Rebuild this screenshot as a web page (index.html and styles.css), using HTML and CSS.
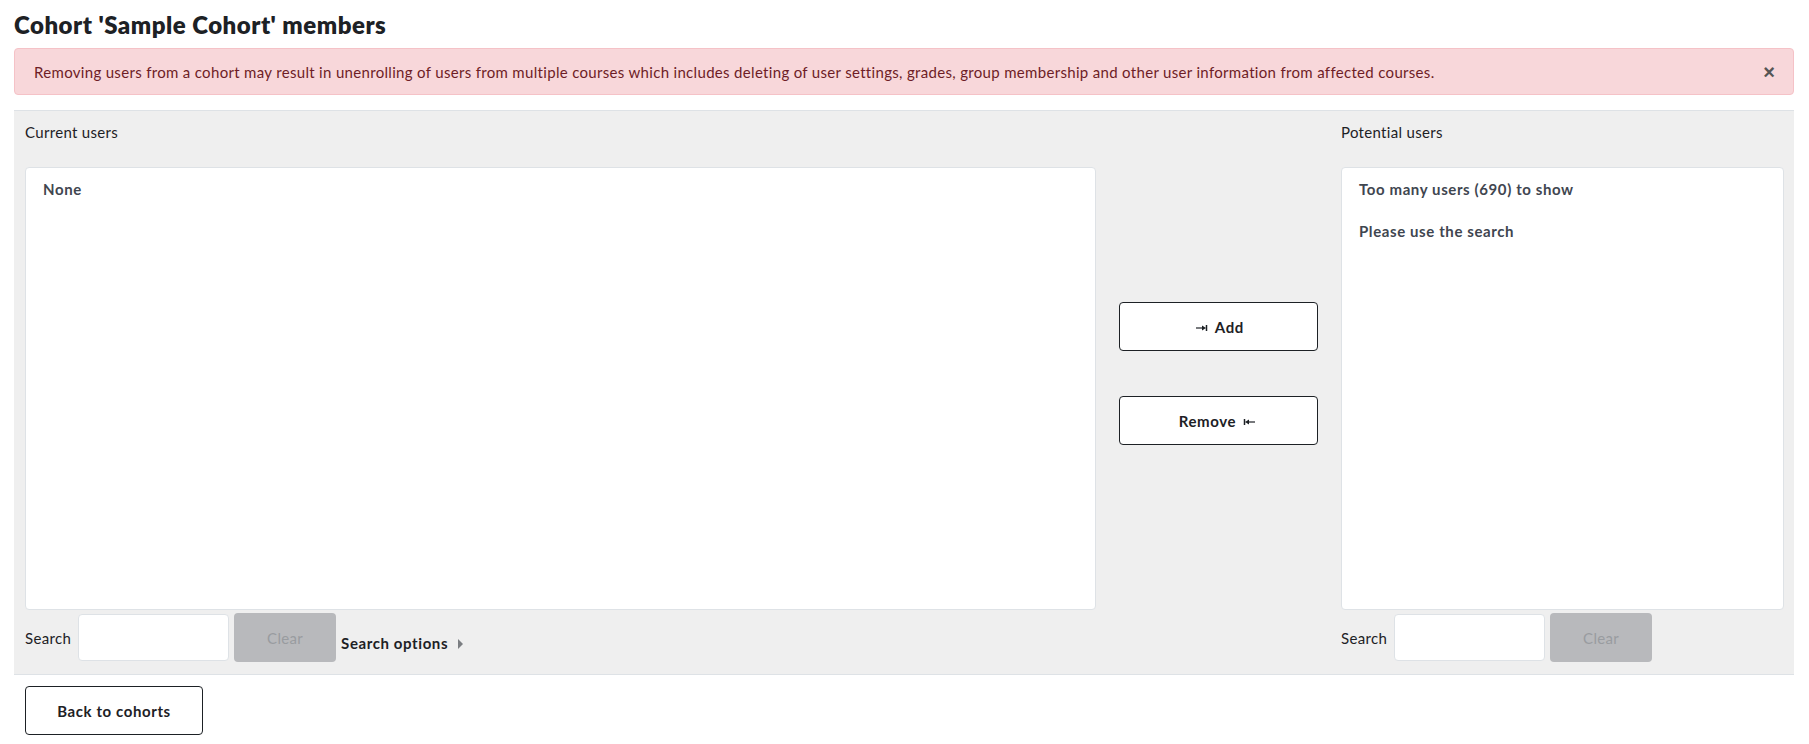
FILE: index.html
```html
<!DOCTYPE html>
<html lang="en">

<head>
    <meta charset="UTF-8">
    <meta name="viewport" content="width=device-width, initial-scale=1.0">
    <title>Cohort members</title>
    <link rel="stylesheet" href="styles.css">
</head>

<body>
    <div class="page">
        <h2 class="title">Cohort 'Sample Cohort' members</h2>

        <div class="alert">
            <span>Removing users from a cohort may result in unenrolling of users from multiple courses which includes deleting of user settings, grades, group membership and other user information from affected courses.</span>
            <button class="close">&times;</button>
        </div>

        <div class="selector">
            <div class="col">
                <label class="col-label">Current users</label>
                <div class="userbox">
                    <div class="opt">None</div>
                </div>
                <div class="search-row">
                    <label>Search</label>
                    <input type="text" class="search-input">
                    <button class="clear" disabled>Clear</button>
                    <span class="search-options">Search options <span class="caret"></span></span>
                </div>
            </div>

            <div class="middle">
                <button class="btn">
                    <svg class="arrow" width="12" height="8" viewBox="0 0 12 8">
                        <path d="M0 4h7" stroke="#1d2125" stroke-width="1.2" />
                        <path d="M6 1.5l4 2.5-4 2.5z" fill="#1d2125" />
                        <path d="M10.5 1v6" stroke="#1d2125" stroke-width="1.5" />
                    </svg>
                    Add
                </button>
                <button class="btn">
                    Remove
                    <svg class="arrow" width="12" height="8" viewBox="0 0 12 8">
                        <path d="M1.5 1v6" stroke="#1d2125" stroke-width="1.5" />
                        <path d="M6 1.5l-4 2.5 4 2.5z" fill="#1d2125" />
                        <path d="M5 4h7" stroke="#1d2125" stroke-width="1.2" />
                    </svg>
                </button>
            </div>

            <div class="col">
                <label class="col-label">Potential users</label>
                <div class="userbox">
                    <div class="opt">Too many users (690) to show</div>
                    <div class="opt">Please use the search</div>
                </div>
                <div class="search-row">
                    <label>Search</label>
                    <input type="text" class="search-input">
                    <button class="clear" disabled>Clear</button>
                </div>
            </div>
        </div>

        <button class="btn back">Back to cohorts</button>
    </div>
</body>

</html>
```

FILE: styles.css
```css
* {
    box-sizing: border-box;
}

body {
    margin: 0;
    font-family: Lato, "Liberation Sans", sans-serif;
    font-size: 15px;
    letter-spacing: 0.32px;
    color: #1d2125;
    background-color: #fff;
}

.page {
    padding: 0 15px 0 14px;
}

.title {
    margin: 0;
    padding-top: 11px;
    font-size: 24px;
    font-weight: 800;
    letter-spacing: 0.5px;
    line-height: 28px;
    color: #1d2125;
}

.alert {
    display: flex;
    align-items: center;
    justify-content: space-between;
    margin-top: 9px;
    height: 47px;
    padding: 0 18px 0 19px;
    background-color: #f8d7da;
    border: 1px solid #f5c2c7;
    border-radius: 4px;
    color: #6e1d26;
}

.close {
    background: none;
    border: none;
    padding: 0;
    font-size: 20px;
    font-weight: bold;
    color: #555;
    cursor: pointer;
    line-height: 1;
}

.selector {
    display: grid;
    grid-template-columns: 1071px 245px 1fr;
    margin-top: 15px;
    padding: 0 10px 11px 11px;
    background-color: #efefef;
    border-top: 1px solid #dee2e6;
    border-bottom: 1px solid #dee2e6;
}

.col {
    display: flex;
    flex-direction: column;
}

.col-label {
    height: 56px;
    line-height: 42px;
    color: #1d2125;
}

.userbox {
    height: 443px;
    padding: 12px 17px;
    background-color: #fff;
    border: 1px solid #dee2e6;
    border-radius: 4px;
}

.opt {
    height: 42px;
    line-height: 18px;
    font-weight: 700;
    letter-spacing: 0.6px;
    color: #3f4650;
}

.search-row {
    display: flex;
    align-items: center;
    height: 51px;
    margin-top: 2px;
}

.search-row label {
    margin-right: 7px;
}

.search-input {
    width: 151px;
    height: 47px;
    border: 1px solid #dee2e6;
    border-radius: 4px;
    background-color: #fff;
    font-size: 15px;
}

.clear {
    width: 102px;
    height: 49px;
    margin-left: 5px;
    background-color: #b8b9bc;
    border: none;
    border-radius: 4px;
    color: #999ca0;
    font-family: inherit;
    font-size: 15px;
    letter-spacing: inherit;
}

.search-options {
    margin-left: 5px;
    margin-top: 10px;
    font-weight: 700;
    letter-spacing: 0.6px;
}

.caret {
    display: inline-block;
    margin-left: 6px;
    border-left: 5px solid #7b7e82;
    border-top: 5px solid transparent;
    border-bottom: 5px solid transparent;
}

.middle {
    display: flex;
    flex-direction: column;
    align-items: center;
    gap: 45px;
    padding-top: 191px;
}

.btn {
    width: 199px;
    height: 49px;
    background-color: #fff;
    border: 1px solid #1d2125;
    border-radius: 4px;
    font-family: inherit;
    font-size: 15px;
    font-weight: 700;
    letter-spacing: 0.6px;
    color: #1d2125;
    cursor: pointer;
}

.arrow {
    vertical-align: 1px;
    margin: 0 3px;
}

.back {
    width: 178px;
    margin: 11px 0 0 11px;
}
```
